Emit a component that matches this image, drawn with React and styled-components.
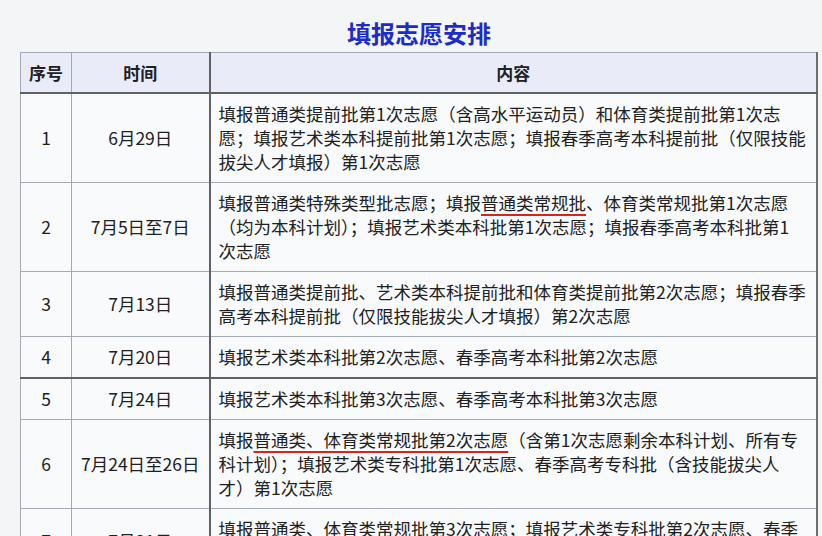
import React from 'react';
import styled, { createGlobalStyle } from 'styled-components';

const GlobalStyle = createGlobalStyle`
  html, body {
    margin: 0;
    padding: 0;
    background: #f4f5f7;
  }
  body {
    font-family: "Noto Sans CJK SC", "Noto Sans", sans-serif;
    color: #202122;
  }
`;

// whole page, table sits 20px from left edge
const Page = styled.div`
  padding: 18px 4px 0 20px;
  width: 822px;
  height: 536px;
  box-sizing: border-box;
  overflow: hidden;
`;

const Title = styled.h2`
  margin: 0 0 4px;
  text-align: center;
  font-size: 24px;
  line-height: 30px;
  font-weight: 700;
  color: #1c2cc8;
`;

const Table = styled.table`
  width: 798px;
  border-collapse: collapse;
  table-layout: fixed;
  border-left: 1px solid #a2a9b1;
  border-top: 1px solid #a2a9b1;
  border-right: 2px solid #6a6d72;
  background: #f9fafb;
`;

const HeadCell = styled.th`
  background: #eaebf8;
  border: 1px solid #a2a9b1;
  border-bottom: 2px solid #5f6166;
  border-left: ${(p) => (p.$strong ? '2px solid #5f6166' : '1px solid #a2a9b1')};
  height: 39px;
  padding: 0 8px;
  font-size: 17px;
  font-weight: 700;
  text-align: center;
`;

const Row = styled.tr`
  border-bottom: ${(p) => (p.$strong ? '2px solid #5f6166' : '1px solid #a2a9b1')};
`;

const Cell = styled.td`
  border-left: ${(p) => (p.$strong ? '2px solid #5f6166' : '1px solid #a2a9b1')};
  padding: 8px ${(p) => (p.$center ? '2px' : '8px')};
  font-size: 17.5px;
  line-height: 24px;
  vertical-align: middle;
  white-space: ${(p) => (p.$center ? 'nowrap' : 'normal')};
  text-align: ${(p) => (p.$center ? 'center' : 'left')};
`;

const Mark = styled.span`
  text-decoration: underline;
  text-decoration-color: #d8231f;
  text-decoration-thickness: 2px;
  text-underline-offset: 4px;
`;

// each entry of lines is one visual line of the content cell
const rows = [
  {
    no: '1',
    date: '6月29日',
    lines: [
      '填报普通类提前批第1次志愿（含高水平运动员）和体育类提前批第1次志',
      '愿；填报艺术类本科提前批第1次志愿；填报春季高考本科提前批（仅限技能',
      '拔尖人才填报）第1次志愿',
    ],
  },
  {
    no: '2',
    date: '7月5日至7日',
    lines: [
      <>
        填报普通类特殊类型批志愿；填报<Mark>普通类常规批</Mark>、体育类常规批第1次志愿
      </>,
      '（均为本科计划）；填报艺术类本科批第1次志愿；填报春季高考本科批第1',
      '次志愿',
    ],
  },
  {
    no: '3',
    date: '7月13日',
    lines: [
      '填报普通类提前批、艺术类本科提前批和体育类提前批第2次志愿；填报春季',
      '高考本科提前批（仅限技能拔尖人才填报）第2次志愿',
    ],
  },
  {
    no: '4',
    date: '7月20日',
    lines: ['填报艺术类本科批第2次志愿、春季高考本科批第2次志愿'],
    strong: true,
  },
  {
    no: '5',
    date: '7月24日',
    lines: ['填报艺术类本科批第3次志愿、春季高考本科批第3次志愿'],
  },
  {
    no: '6',
    date: '7月24日至26日',
    lines: [
      <>
        填报<Mark>普通类、体育类常规批第2次志愿</Mark>（含第1次志愿剩余本科计划、所有专
      </>,
      '科计划）；填报艺术类专科批第1次志愿、春季高考专科批（含技能拔尖人',
      '才）第1次志愿',
    ],
  },
  {
    no: '7',
    date: '7月31日',
    lines: [
      '填报普通类、体育类常规批第3次志愿；填报艺术类专科批第2次志愿、春季',
      '高考专科批第2次志愿',
    ],
  },
];

const App = () => {
  return (
    <Page>
      <GlobalStyle />
      <Title>填报志愿安排</Title>
      <Table>
        <colgroup>
          <col style={{ width: 51 }} />
          <col style={{ width: 138 }} />
          <col />
        </colgroup>
        <thead>
          <tr>
            <HeadCell>序号</HeadCell>
            <HeadCell>时间</HeadCell>
            <HeadCell $strong>内容</HeadCell>
          </tr>
        </thead>
        <tbody>
          {rows.map((r) => (
            <Row key={r.no} $strong={r.strong}>
              <Cell $center>{r.no}</Cell>
              <Cell $center>{r.date}</Cell>
              <Cell $strong>
                {r.lines.map((line, i) => (
                  <React.Fragment key={i}>
                    {i > 0 && <br />}
                    {line}
                  </React.Fragment>
                ))}
              </Cell>
            </Row>
          ))}
        </tbody>
      </Table>
    </Page>
  );
};

export default App;
